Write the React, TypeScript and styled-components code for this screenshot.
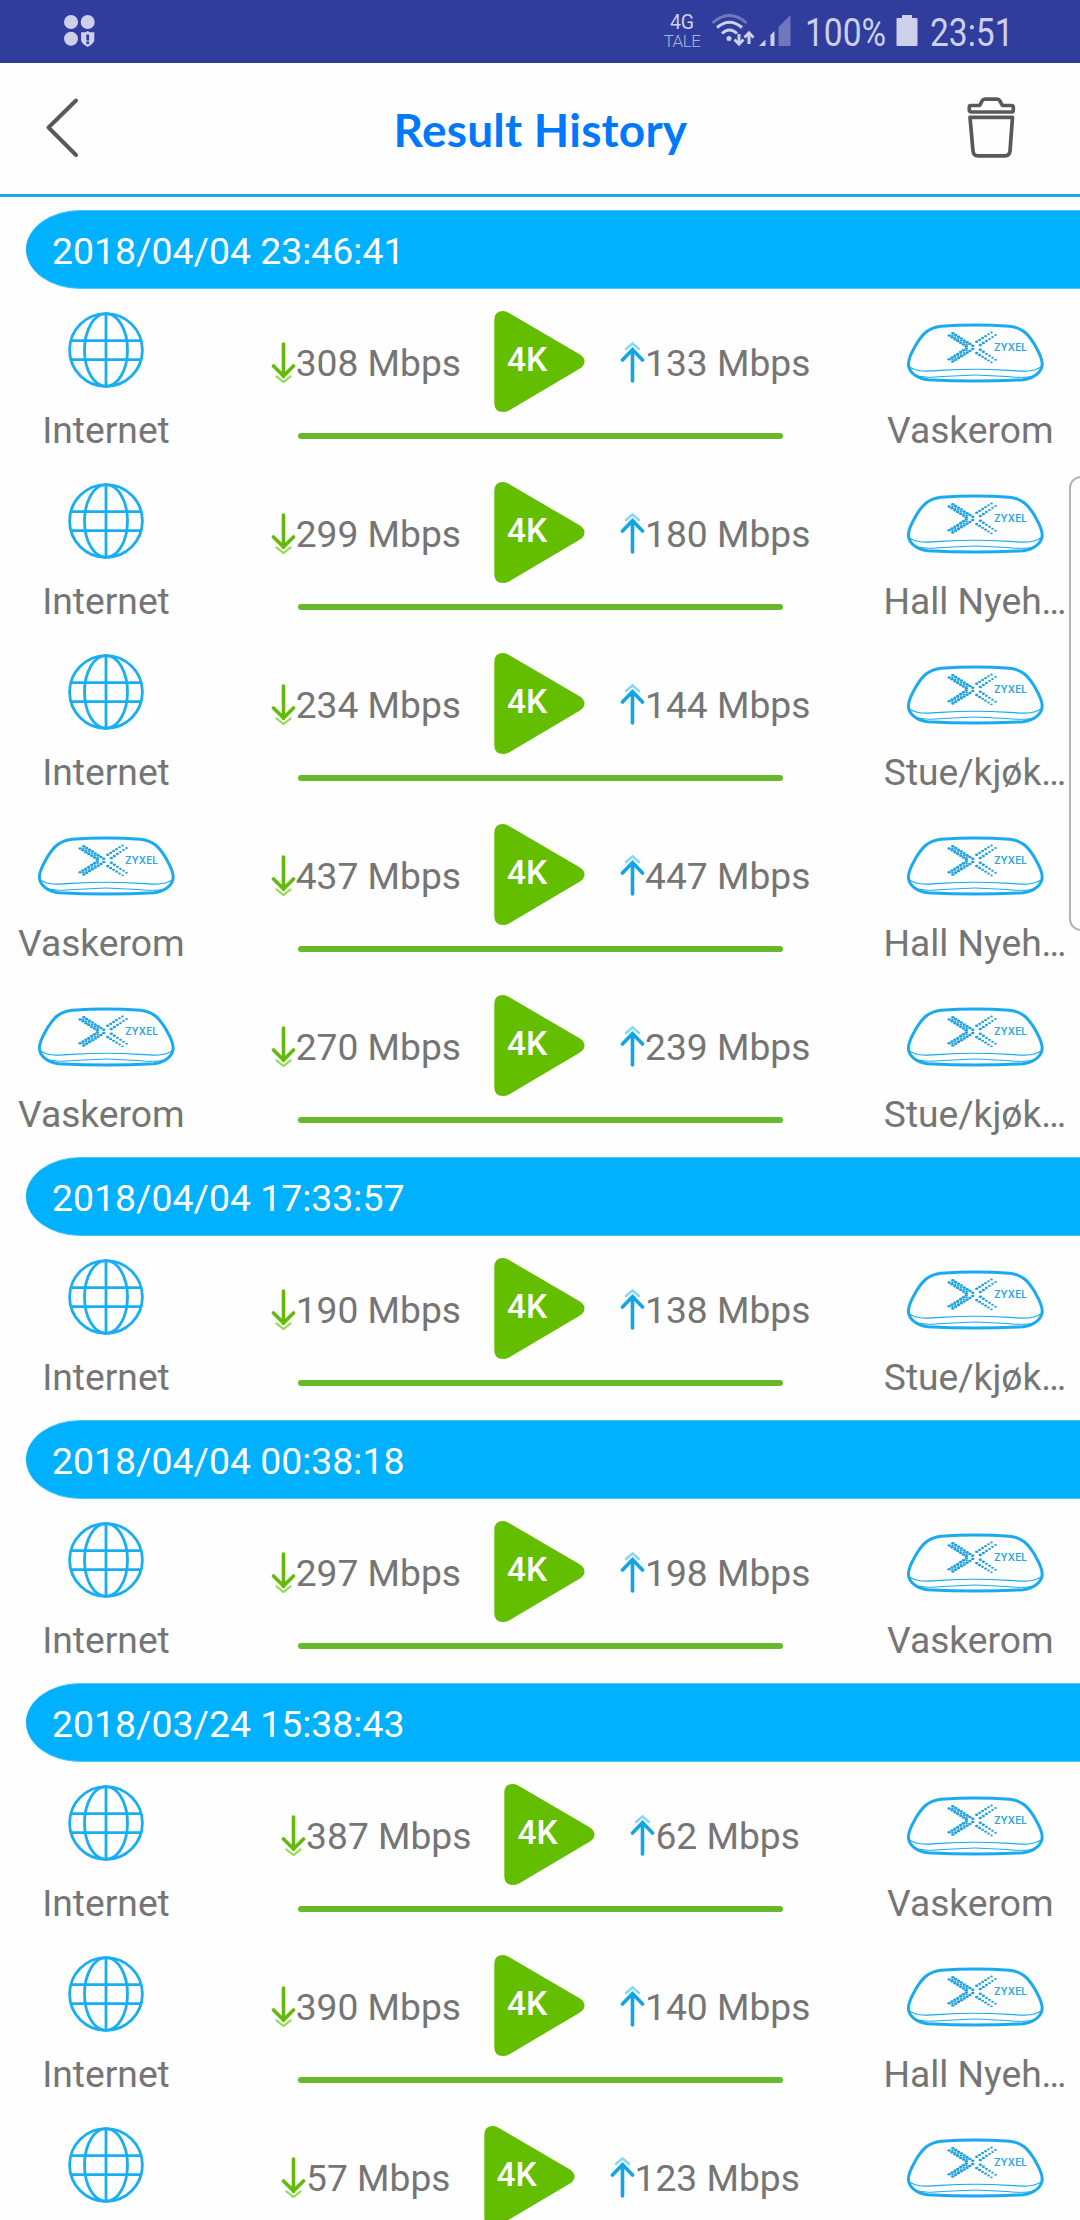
import React from 'react';
import styled, { createGlobalStyle } from 'styled-components';

const Global = createGlobalStyle`
  * { box-sizing: border-box; }
  html, body { margin: 0; padding: 0; background: #fff; }
  body { font-family: Roboto, "Noto Sans", sans-serif; }
`;

const Screen = styled.div`
  position: relative;
  width: 1080px;
  height: 2220px;
  overflow: hidden;
  background: #fefefe;
  display: flex;
  flex-direction: column;
`;

const StatusBar = styled.div`
  flex: none;
  height: 63px;
  background: #303d9d;
  color: #cdd0e9;
  display: flex;
  justify-content: space-between;
  padding: 14px 67px 0 64px;
`;

const StatusGroup = styled.div`
  display: flex;
  align-items: flex-start;
`;

const NetworkLabel = styled.div`
  width: 36px;
  margin-right: 11px;
  display: flex;
  flex-direction: column;
  align-items: center;
  line-height: 18px;
`;

const NetworkType = styled.span`
  font-size: 19.5px;
`;

const Carrier = styled.span`
  font-size: 17px;
  font-weight: 300;
  letter-spacing: -0.5px;
  color: #aeb3dc;
`;

const StatusText = styled.span<{ $width: number }>`
  width: ${p => p.$width}px;
  font-size: 39px;
  line-height: 46px;
  margin-top: -4px;
  white-space: nowrap;
`;

const Condensed = styled.span`
  display: inline-block;
  transform: scaleX(0.86);
  transform-origin: left center;
`;

const StatusSvg = styled.svg<{ $gap?: number }>`
  flex: none;
  margin-right: ${p => p.$gap ?? 0}px;
`;

const Header = styled.header`
  flex: none;
  height: 134px;
  border-bottom: 3px solid #1ba9ea;
  display: flex;
  align-items: center;
  padding: 0 64px 0 44px;
`;

const IconButton = styled.button`
  border: 0;
  padding: 0;
  background: none;
  width: 50px;
  height: 64px;
  display: flex;
  margin-top: -4px;
`;

const Title = styled.h1`
  flex: 1;
  margin: 0;
  padding: 2px 0 0 21px;
  text-align: center;
  font-family: Lato, sans-serif;
  font-size: 46px;
  font-weight: 700;
  line-height: 56px;
  letter-spacing: 0.25px;
  color: #0078fc;
  white-space: nowrap;
`;

const List = styled.main`
  padding-top: 13px;
`;

const DateBar = styled.h2`
  margin: 0 0 13px 26px;
  height: 79px;
  padding-left: 26px;
  border: 1px solid #4ec6fc;
  border-width: 1px 0;
  border-radius: 54px 0 0 54px / 39.5px 0 0 39.5px;
  background: #00b1ff;
  color: #fff;
  font-size: 37.4px;
  font-weight: 400;
  line-height: 80px;
`;

const Row = styled.article`
  height: 171px;
  padding: 0 5px 0 6px;
  display: flex;
  justify-content: space-between;
`;

const Device = styled.div`
  width: 200px;
  display: flex;
  flex-direction: column;
  align-items: center;
`;

const DeviceIcon = styled.div`
  height: 98px;
  display: flex;
  align-items: flex-start;
  padding-top: 10px;
`;

const RouterSvg = styled.svg`
  margin-top: 8.5px;
`;

const DeviceName = styled.div`
  color: #757575;
  font-size: 37.2px;
  line-height: 44px;
  white-space: pre;
  padding-top: 8px;
`;

const Link = styled.div`
  width: 600px;
  display: flex;
  flex-direction: column;
  align-items: center;
`;

const Speeds = styled.div`
  height: 119px;
  display: flex;
  align-items: center;
  white-space: nowrap;
`;

const Speed = styled.div`
  display: flex;
  align-items: center;
`;

const SpeedValue = styled.span`
  padding-top: 2px;
  color: #757575;
  font-size: 37.2px;
  line-height: 44px;
`;

const Grade = styled.div`
  position: relative;
  width: 91px;
  height: 101px;
  margin: 0 35px 0 33px;
`;

const GradeText = styled.span`
  position: absolute;
  left: 13px;
  top: 29px;
  font-size: 33.5px;
  line-height: 40px;
  font-weight: 500;
  color: #fff;
`;

const Bar = styled.div`
  width: 485px;
  height: 6px;
  margin-top: 12px;
  border-radius: 3px;
  background: #68b82b;
`;

const EdgeHandle = styled.div`
  position: absolute;
  left: 1069px;
  top: 476px;
  width: 24px;
  height: 455px;
  border: 2px solid #b4b4b4;
  border-radius: 14px;
  background: #fefefe;
`;

const AppsIcon = () => (
  <StatusSvg width="34" height="34" viewBox="0 0 34 34" fill="#cdd0e9">
    <circle cx="7" cy="8" r="7" />
    <circle cx="23.7" cy="8" r="7" />
    <circle cx="7" cy="24.7" r="7" />
    <path d="M23.7 17l2 1.300H30.300v7.500c0 3-3.500 5.500-6.600 7.200-3.100-1.700-6.600-4.200-6.600-7.200v-7.500h4.600z" />
    <path d="M22.300 20.500h2.800v6h-2.800zM22.300 27.500h2.800v2.500h-2.800z" fill="#303d9d" />
  </StatusSvg>
);

const WifiIcon = () => (
  <StatusSvg $gap={2} width="46" height="34" viewBox="0 0 46 34" fill="none" stroke="#cdd0e9" strokeWidth="3">
    <path d="M1.500 9Q18.500-6 35.500 9" stroke="#6f78bc" />
    <path d="M6 13.500Q18.500 3 31 13.500" />
    <path d="M11 19.500Q18.500 12.500 26 19.500" />
    <circle cx="18" cy="24.500" r="2.500" fill="#cdd0e9" stroke="none" />
    <path d="M28 20v9M38 30V21" />
    <path d="M23.500 25.500L28 30.300L32.500 25.500M33.500 23.500L38 18.700L42.500 23.500" strokeWidth="2.800" />
  </StatusSvg>
);

const SignalIcon = () => (
  <StatusSvg $gap={14} width="32" height="32" viewBox="0 0 32 32" fill="#cdd0e9">
    <path d="M0 32L6.500 25.500V32z" />
    <path d="M11.500 21L15.500 17V32h-4z" />
    <path d="M19.500 13L31.500 1V32h-12z" fill="#6f78bc" />
  </StatusSvg>
);

const BatteryIcon = () => (
  <StatusSvg $gap={12} width="22" height="32" viewBox="0 0 22 32" fill="#cdd0e9">
    <path d="M6 1h10v3h4.500q1 0 1 1V31q0 1-1 1H1.500q-1 0-1-1V5q0-1 1-1H6z" />
  </StatusSvg>
);

const BackIcon = () => (
  <svg width="50" height="64" viewBox="0 0 50 64" fill="none" stroke="#595959" strokeWidth="4" strokeLinecap="round" strokeLinejoin="round">
    <path d="M32 5.500L4.500 32.500L32 60" />
  </svg>
);

const TrashIcon = () => (
  <svg width="50" height="64" viewBox="0 0 50 64" fill="none" stroke="#595959" strokeWidth="3.700" strokeLinejoin="round">
    <path d="M4.500 10.500H12.500Q14 10.500 15 8L16 6Q17 4.200 19 4.200H31Q33 4.200 34 6L35 8Q36 10.500 37.500 10.500H45.500Q47.300 10.500 47.300 12.300V15Q47.300 17 45.500 17H5.500Q3.300 17 3.300 15V12.300Q3.300 10.500 4.500 10.500z" />
    <path d="M4 22.300H46.500L44 56Q43.500 60.800 39 60.800H12Q7.300 60.800 7 56z" />
  </svg>
);

const GlobeIcon = () => (
  <svg width="76" height="80" viewBox="0 0 76 80" fill="none" stroke="#19aef4" strokeWidth="2.800">
    <circle cx="38" cy="38" r="36.400" />
    <ellipse cx="38" cy="38" rx="21.500" ry="36.400" />
    <path d="M38 1V75M3 28.700H73M3 47.700H73" />
  </svg>
);

type Dot = { x: number; y: number; rx: number; ry: number };

/* The X emblem: a dense chevron on the left, two lighter dotted arms on the right,
   mirrored about the horizontal axis. */
const AXIS = 26.4;
const emblem: Dot[] = [];
const addMirrored = (x: number, y: number, rx: number, ry: number) => {
  emblem.push({ x, y, rx, ry }, { x, y: 2 * AXIS - y, rx, ry });
};
for (let k = 0; k < 8; k++) {
  addMirrored(47.8 + k * 2.85, 12.3 + k * 1.77, 1.75, 1.25);
}
for (let k = 0; k < 7; k++) {
  addMirrored(44.2 + k * 2.85, 14.6 + k * 1.77, 1.75, 1.25);
  if (k < 6) addMirrored(47.4 + k * 2.85, 14.4 + k * 1.77, 1.2, 0.9);
}
for (let k = 0; k < 6; k++) {
  const r = 1.7 - k * 0.08;
  addMirrored(71.7 + k * 2.95, 20.7 - k * 1.85, r, r * 0.75);
  addMirrored(75.3 + k * 3.05, 24 - k * 2, r, r * 0.75);
}

const RouterIcon = () => (
  <RouterSvg width="140" height="66" viewBox="0 0 140 66" fill="none" stroke="#19aaf0">
    <path d="M36 5.200Q70.300 2.800 104.600 5.200C117 6.500 123 13 128.600 22C133 30 137.200 36 137.200 43C137.200 51 129 57.300 118 58.700Q70.300 61.500 22.600 58.700C11.600 57.300 3.400 51 3.400 43C3.400 36 7.600 30 12 22C17.600 13 23.600 6.500 36 5.200z" strokeWidth="3" />
    <path d="M4.500 46C12 51 20 50.500 36 49.400Q70 47.200 104 49.400C120 50.500 128 51 136 46" strokeWidth="1.100" />
    <path d="M12 55Q24 57.500 38 55.500Q70 52.500 102 55.500Q118 57.500 129 55" strokeWidth="1" />
    <g fill="#1fa0e0" stroke="none">
      {emblem.map((d, i) => <ellipse key={i} cx={d.x} cy={d.y} rx={d.rx} ry={d.ry} />)}
    </g>
    <text x="89" y="30" fontFamily="Inter, sans-serif" fontWeight="600" fontSize="9.800" textLength="33" lengthAdjust="spacingAndGlyphs" fill="#2ba6e2" stroke="none">ZYXEL</text>
  </RouterSvg>
);

const DownArrow = () => (
  <svg width="25" height="42" viewBox="0 0 25 42" fill="none" strokeLinecap="round">
    <path d="M5.500 35.500L12.500 41L19.500 35.500" stroke="#8fdc4c" strokeWidth="2.200" />
    <path d="M12.500 3V35.500M2.500 25L12.500 35L22.500 25" stroke="#64b90c" strokeWidth="3.600" />
  </svg>
);

const UpArrow = () => (
  <svg width="25" height="42" viewBox="0 0 25 42" fill="none" strokeLinecap="round">
    <path d="M6 8L12.500 2.500L19 8" stroke="#8bd7f5" strokeWidth="2.600" />
    <path d="M12.500 40V8.500M2.500 19L12.500 8.500L22.500 19" stroke="#12a5e6" strokeWidth="3.600" />
  </svg>
);

const PlayShape = () => (
  <svg width="91" height="101" viewBox="0 0 91 101">
    <path d="M0.300 9Q0.300 0 9 0Q12 0 15 2L86 43.500Q90.500 46.500 90.500 50.500Q90.500 54.500 86 57.500L15 99.500Q12 101 9 101Q0.300 101 0.300 92z" fill="#64be00" />
  </svg>
);

type Kind = 'internet' | 'router';
type Node = { kind: Kind; name?: string };
type Result = { from: Node; to: Node; down: number; up: number };
type Group = { date: string; results: Result[] };

const internet: Node = { kind: 'internet', name: 'Internet' };
const vaskerom: Node = { kind: 'router', name: 'Vaskerom ' };
const hall: Node = { kind: 'router', name: 'Hall Nyeh…' };
const stue: Node = { kind: 'router', name: 'Stue/kjøk…' };

const groups: Group[] = [
  {
    date: '2018/04/04 23:46:41',
    results: [
      { from: internet, to: vaskerom, down: 308, up: 133 },
      { from: internet, to: hall, down: 299, up: 180 },
      { from: internet, to: stue, down: 234, up: 144 },
      { from: vaskerom, to: hall, down: 437, up: 447 },
      { from: vaskerom, to: stue, down: 270, up: 239 },
    ],
  },
  { date: '2018/04/04 17:33:57', results: [{ from: internet, to: stue, down: 190, up: 138 }] },
  { date: '2018/04/04 00:38:18', results: [{ from: internet, to: vaskerom, down: 297, up: 198 }] },
  {
    date: '2018/03/24 15:38:43',
    results: [
      { from: internet, to: vaskerom, down: 387, up: 62 },
      { from: internet, to: hall, down: 390, up: 140 },
      { from: { kind: 'internet' }, to: { kind: 'router' }, down: 57, up: 123 },
    ],
  },
];

const Endpoint = ({ kind, name }: Node) => (
  <Device>
    <DeviceIcon>{kind === 'internet' ? <GlobeIcon /> : <RouterIcon />}</DeviceIcon>
    {name && <DeviceName>{name}</DeviceName>}
  </Device>
);

const ResultRow = ({ from, to, down, up }: Result) => (
  <Row>
    <Endpoint {...from} />
    <Link>
      <Speeds>
        <Speed><DownArrow /><SpeedValue>{down} Mbps</SpeedValue></Speed>
        <Grade><PlayShape /><GradeText>4K</GradeText></Grade>
        <Speed><UpArrow /><SpeedValue>{up} Mbps</SpeedValue></Speed>
      </Speeds>
      <Bar />
    </Link>
    <Endpoint {...to} />
  </Row>
);

export default function App() {
  return (
    <>
      <Global />
      <Screen>
        <StatusBar>
          <StatusGroup><AppsIcon /></StatusGroup>
          <StatusGroup>
            <NetworkLabel><NetworkType>4G</NetworkType><Carrier>TALE</Carrier></NetworkLabel>
            <WifiIcon />
            <SignalIcon />
            <StatusText $width={91}><Condensed>100%</Condensed></StatusText>
            <BatteryIcon />
            <StatusText $width={83}><Condensed>23:51</Condensed></StatusText>
          </StatusGroup>
        </StatusBar>
        <Header>
          <IconButton aria-label="Back"><BackIcon /></IconButton>
          <Title>Result History</Title>
          <IconButton aria-label="Delete"><TrashIcon /></IconButton>
        </Header>
        <List>
          {groups.map(g => (
            <section key={g.date}>
              <DateBar>{g.date}</DateBar>
              {g.results.map((r, i) => <ResultRow key={i} {...r} />)}
            </section>
          ))}
        </List>
        <EdgeHandle />
      </Screen>
    </>
  );
}
